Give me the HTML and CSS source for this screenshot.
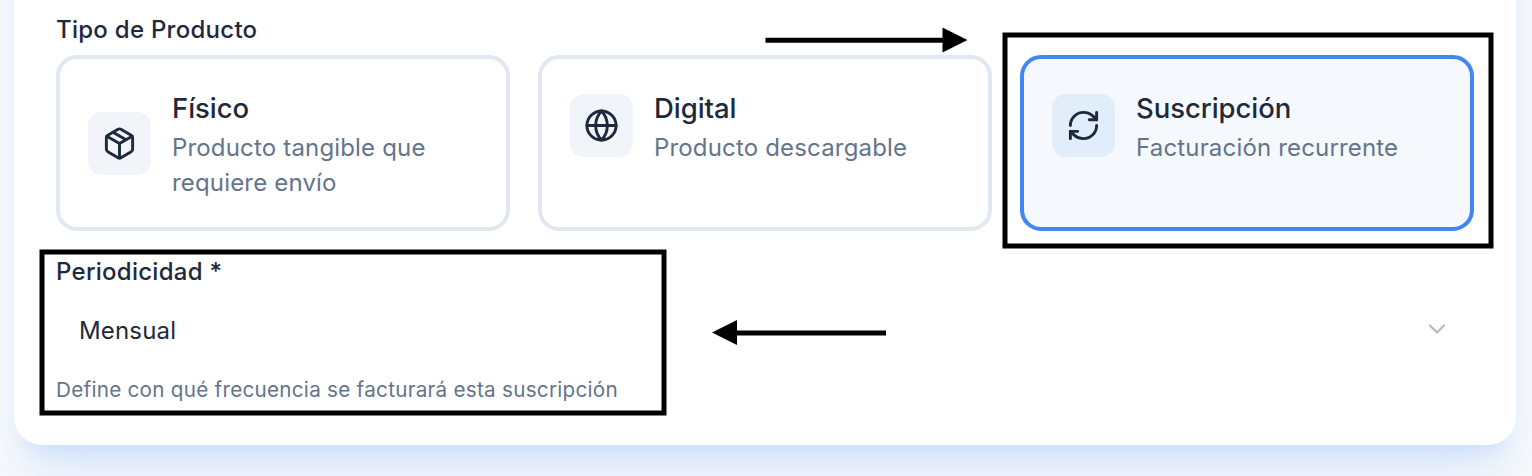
FILE: index.html
```html
<!DOCTYPE html>
<html lang="es">
<head>
    <meta charset="UTF-8">
    <meta name="viewport" content="width=device-width, initial-scale=1.0">
    <title>Tipo de Producto</title>
    <link rel="stylesheet" href="styles.css">
</head>
<body>
    <main class="panel">
        <div class="label">Tipo de Producto</div>
        <div class="options">
            <div class="option">
                <div class="option-icon">
                    <svg class="icon" viewBox="0 0 24 24">
                        <path d="m7.5 4.27 9 5.15"/>
                        <path d="M21 8a2 2 0 0 0-1-1.73l-7-4a2 2 0 0 0-2 0l-7 4A2 2 0 0 0 3 8v8a2 2 0 0 0 1 1.73l7 4a2 2 0 0 0 2 0l7-4A2 2 0 0 0 21 16Z"/>
                        <path d="m3.3 7 8.7 5 8.7-5"/>
                        <path d="M12 22V12"/>
                    </svg>
                </div>
                <div class="option-text">
                    <div class="option-title">Físico</div>
                    <div class="option-desc">Producto tangible que requiere envío</div>
                </div>
            </div>
            <div class="option option-top">
                <div class="option-icon">
                    <svg class="icon" viewBox="0 0 24 24">
                        <circle cx="12" cy="12" r="10"/>
                        <path d="M12 2a14.5 14.5 0 0 0 0 20 14.5 14.5 0 0 0 0-20"/>
                        <path d="M2 12h20"/>
                    </svg>
                </div>
                <div class="option-text">
                    <div class="option-title">Digital</div>
                    <div class="option-desc">Producto descargable</div>
                </div>
            </div>
            <div class="option option-top selected">
                <div class="option-icon">
                    <svg class="icon" viewBox="0 0 24 24">
                        <path d="M3 12a9 9 0 0 1 9-9 9.75 9.75 0 0 1 6.74 2.74L21 8"/>
                        <path d="M21 3v5h-5"/>
                        <path d="M21 12a9 9 0 0 1-9 9 9.75 9.75 0 0 1-6.74-2.74L3 16"/>
                        <path d="M8 16H3v5"/>
                    </svg>
                </div>
                <div class="option-text">
                    <div class="option-title">Suscripción</div>
                    <div class="option-desc">Facturación recurrente</div>
                </div>
            </div>
        </div>

        <div class="label label-period">Periodicidad *</div>
        <div class="select">
            <span>Mensual</span>
            <svg class="chevron" viewBox="0 0 24 24"><path d="m6 9 6 6 6-6"/></svg>
        </div>
        <div class="hint">Define con qué frecuencia se facturará esta suscripción</div>
    </main>

    <!-- callout boxes and arrows over the form -->
    <svg class="callouts" viewBox="0 0 1532 476">
        <rect x="1005" y="35" width="486" height="211"/>
        <rect x="42" y="252" width="622" height="161"/>
        <path d="M765.5 40.3H943M886 333H736"/>
        <path class="head" d="M942.5 27.5 967.5 40 942.5 52.5ZM737 320 712 332.5 737 345Z"/>
    </svg>
</body>
</html>
```

FILE: styles.css
```css
* { box-sizing: border-box; }
body { display: flow-root; margin: 0; height: 476px; overflow: hidden; padding: 0 16px 0 14px; background: #f8fafc; color: #1e293b; font-family: Inter, "Liberation Sans", sans-serif; font-size: 24px; line-height: 35px; letter-spacing: 0.17px; }
/* the panel continues above the visible area */
.panel { height: 645px; margin-top: -200px; padding: 212px 42px 0; background: #fff; border-radius: 28px; box-shadow: 0 40px 50px -10px rgba(59,130,246,0.14), 0 16px 20px -12px rgba(59,130,246,0.14); }
.label { font-weight: 500; letter-spacing: 0.27px; }
.options { display: grid; grid-template-columns: repeat(3, 1fr); gap: 28px; margin-top: 8px; }
.option { display: flex; align-items: center; gap: 21px; height: 176px; padding: 28px; border: 4px solid #e2e8f0; border-radius: 21px; }
.option-top { align-items: flex-start; }
.option-top .option-icon { margin-top: 7px; }
.option-icon { flex: none; width: 63px; height: 63px; padding: 14px; border-radius: 14px; background: #f1f5f9; }
.icon { display: block; width: 35px; height: 35px; fill: none; stroke: #1e293b; stroke-width: 2; stroke-linecap: round; stroke-linejoin: round; }
.option-title { font-size: 27.5px; font-weight: 500; line-height: 42px; letter-spacing: -0.05px; }
.option-desc { padding-top: 1px; margin-bottom: -1px; color: #64748b; }
.selected { border-color: #4285f4; background: #f5f9fe; }
.selected .option-icon { background: #e1edfb; }
.label-period { margin-top: 23px; }
.select { display: flex; align-items: center; justify-content: space-between; height: 70px; margin-top: 6px; padding: 0 23px; }
.chevron { width: 28px; height: 28px; margin-bottom: 2px; fill: none; stroke: #b1bac6; stroke-width: 2; stroke-linecap: round; stroke-linejoin: round; }
.hint { margin-top: 11px; color: #64748b; font-size: 20.7px; line-height: 28px; letter-spacing: 0.25px; }
.callouts { position: absolute; top: 0; left: 0; width: 1532px; height: 476px; fill: none; stroke: #000; stroke-width: 5; }
.head { fill: #000; stroke: none; }
```
